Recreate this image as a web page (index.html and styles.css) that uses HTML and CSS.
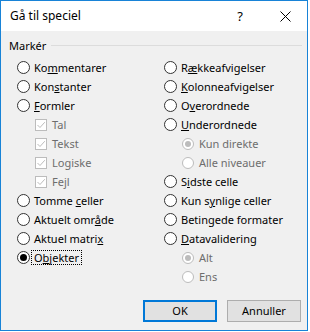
FILE: index.html
```html
<!DOCTYPE html>
<html lang="da">
<head>
<meta charset="utf-8">
<title>Gå til speciel</title>
<link rel="stylesheet" href="styles.css">
</head>
<body>
<div class="window">
  <div class="titlebar">
    <div class="title">Gå til speciel</div>
    <div class="cap help">?</div>
    <div class="cap close">
      <svg width="11" height="11" viewBox="0 0 11 11"><path d="M0.5 0.5 L10.5 10.5 M10.5 0.5 L0.5 10.5" stroke="#000" stroke-width="1" fill="none"/></svg>
    </div>
  </div>
  <div class="content">
    <div class="group-head"><span class="group-label">Markér</span><span class="group-line"></span></div>
    <div class="cols">
      <div class="col">
        <div class="row"><span class="radio"></span><span class="lbl">Ko<u>m</u>mentarer</span></div>
        <div class="row"><span class="radio"></span><span class="lbl">Kon<u>s</u>tanter</span></div>
        <div class="row"><span class="radio"></span><span class="lbl"><u>F</u>ormler</span></div>
        <div class="row sub"><span class="check"><svg width="12" height="12" viewBox="0 0 12 12"><rect x="0.5" y="0.5" width="11" height="11" fill="#fff" stroke="#bcbcbc"/><path d="M2.5 6 L5 8.5 L9.8 3.2" stroke="#bcbcbc" stroke-width="1" fill="none"/></svg></span><span class="lbl dis">Tal</span></div>
        <div class="row sub"><span class="check"><svg width="12" height="12" viewBox="0 0 12 12"><rect x="0.5" y="0.5" width="11" height="11" fill="#fff" stroke="#bcbcbc"/><path d="M2.5 6 L5 8.5 L9.8 3.2" stroke="#bcbcbc" stroke-width="1" fill="none"/></svg></span><span class="lbl dis">Tekst</span></div>
        <div class="row sub"><span class="check"><svg width="12" height="12" viewBox="0 0 12 12"><rect x="0.5" y="0.5" width="11" height="11" fill="#fff" stroke="#bcbcbc"/><path d="M2.5 6 L5 8.5 L9.8 3.2" stroke="#bcbcbc" stroke-width="1" fill="none"/></svg></span><span class="lbl dis">Logiske</span></div>
        <div class="row sub"><span class="check"><svg width="12" height="12" viewBox="0 0 12 12"><rect x="0.5" y="0.5" width="11" height="11" fill="#fff" stroke="#bcbcbc"/><path d="M2.5 6 L5 8.5 L9.8 3.2" stroke="#bcbcbc" stroke-width="1" fill="none"/></svg></span><span class="lbl dis">Fejl</span></div>
        <div class="row"><span class="radio"></span><span class="lbl">Tomme <u>c</u>eller</span></div>
        <div class="row"><span class="radio"></span><span class="lbl">Aktuelt omr<u>å</u>de</span></div>
        <div class="row"><span class="radio"></span><span class="lbl">Aktuel matri<u>x</u></span></div>
        <div class="row"><span class="radio"><span class="dot"></span></span><span class="lbl focus">O<u>b</u>jekter</span></div>
      </div>
      <div class="col">
        <div class="row"><span class="radio"></span><span class="lbl">R<u>æ</u>kkeafvigelser</span></div>
        <div class="row"><span class="radio"></span><span class="lbl"><u>K</u>olonneafvigelser</span></div>
        <div class="row"><span class="radio"></span><span class="lbl">O<u>v</u>erordnede</span></div>
        <div class="row"><span class="radio"></span><span class="lbl"><u>U</u>nderordnede</span></div>
        <div class="row sub"><span class="radio small dis"><span class="dot"></span></span><span class="lbl dis">Kun direkte</span></div>
        <div class="row sub"><span class="radio small dis"></span><span class="lbl dis">Alle niveauer</span></div>
        <div class="row"><span class="radio"></span><span class="lbl">S<u>i</u>dste celle</span></div>
        <div class="row"><span class="radio"></span><span class="lbl">Kun s<u>y</u>nlige celler</span></div>
        <div class="row"><span class="radio"></span><span class="lbl">Betin<u>g</u>ede formater</span></div>
        <div class="row"><span class="radio"></span><span class="lbl"><u>D</u>atavalidering</span></div>
        <div class="row sub"><span class="radio small dis"><span class="dot"></span></span><span class="lbl dis">Alt</span></div>
        <div class="row sub"><span class="radio small dis"></span><span class="lbl dis">Ens</span></div>
      </div>
    </div>
    <div class="buttons">
      <div class="btn default">OK</div>
      <div class="btn">Annuller</div>
    </div>
  </div>
</div>
</body>
</html>
```
FILE: styles.css
```css
html, body {
  margin: 0;
  padding: 0;
  background: #ffffff;
}
body {
  font-family: "Noto Sans", "Open Sans", sans-serif;
  font-size: 11px;
  color: #000;
}
.window {
  width: 308px;
  height: 331px;
  box-sizing: border-box;
  border: 1px solid #1883d7;
  display: flex;
  flex-direction: column;
  background: #f0f0f0;
}
.titlebar {
  height: 30px;
  background: #fff;
  display: flex;
  align-items: center;
  flex: none;
}
.title {
  flex: 1;
  padding-left: 9px;
  font-size: 12px;
  padding-bottom: 1px;
}
.cap {
  height: 30px;
  display: flex;
  align-items: center;
  justify-content: center;
}
.help {
  width: 46px;
  font-size: 13px;
  padding-bottom: 1px;
  box-sizing: border-box;
}
.close {
  width: 44px;
}
.close svg {
  display: block;
}
.content {
  flex: 1;
  display: flex;
  flex-direction: column;
  padding-top: 5px;
}
.group-head {
  height: 18px;
  display: flex;
  align-items: center;
  padding-left: 8px;
  padding-right: 5px;
}
.group-label {
  padding-right: 5px;
}
.group-line {
  flex: 1;
  height: 1px;
  background: #dcdcdc;
  margin-top: 1px;
}
.cols {
  display: grid;
  grid-template-columns: 147px 1fr;
  padding-left: 16px;
  margin-top: 4px;
}
.col {
  display: flex;
  flex-direction: column;
}
.row {
  height: 19px;
  display: flex;
  align-items: center;
}
.row.sub {
  padding-left: 18px;
}
.radio {
  width: 13px;
  height: 13px;
  box-sizing: border-box;
  border: 1px solid #333;
  border-radius: 50%;
  background: #fff;
  margin-right: 4px;
  flex: none;
  display: flex;
  align-items: center;
  justify-content: center;
}
.radio .dot {
  width: 7px;
  height: 7px;
  border-radius: 50%;
  background: #000;
}
.radio.small {
  width: 12px;
  height: 12px;
  margin-right: 5px;
}
.radio.dis {
  border-color: #bcbcbc;
}
.radio.dis .dot {
  width: 6px;
  height: 6px;
  background: #bcbcbc;
}
.check {
  width: 12px;
  height: 12px;
  margin-right: 5px;
  flex: none;
}
.check svg {
  display: block;
}
.lbl {
  white-space: nowrap;
  line-height: 13px;
}
.lbl u {
  text-underline-offset: 1px;
}
.lbl.dis {
  color: #6d6d6d;
}
.lbl.focus {
  outline: 1px dotted #000;
  outline-offset: 0;
  margin-left: -2px;
  padding: 0 2px;
}
.buttons {
  display: flex;
  justify-content: flex-end;
  gap: 10px;
  margin-top: 14px;
  padding-right: 6px;
}
.btn {
  width: 74px;
  height: 22px;
  box-sizing: border-box;
  border: 1px solid #adadad;
  background: #e1e1e1;
  display: flex;
  align-items: center;
  justify-content: center;
  padding-bottom: 1px;
}
.btn.default {
  border: 2px solid #0078d7;
}
```
